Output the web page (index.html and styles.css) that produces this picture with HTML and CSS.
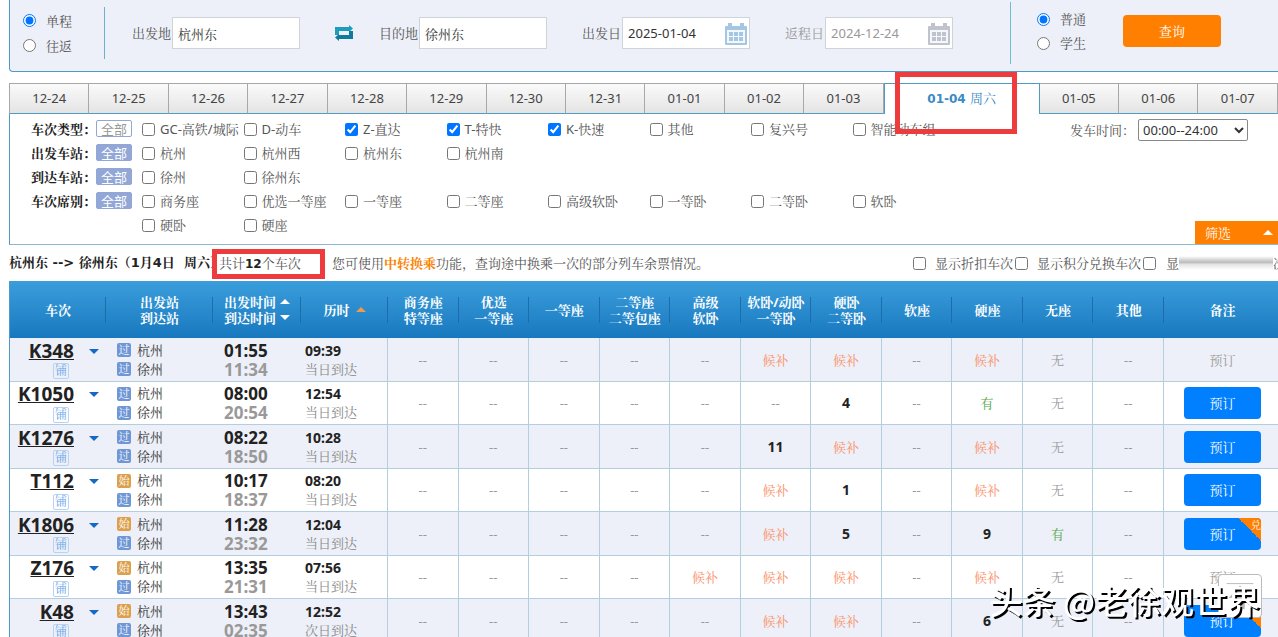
FILE: index.html
```html
<!DOCTYPE html>
<html lang="zh-CN">
<head>
<meta charset="utf-8">
<title>车票查询</title>
<link rel="stylesheet" href="styles.css">
</head>
<body>
<svg class="defs" aria-hidden="true">
  <symbol id="cal" viewBox="0 0 22 22">
    <path fill="currentColor" d="M1 3h2V0h4v3h8V0h4v3h2q1 0 1 1v17q0 1-1 1H1q-1 0-1-1V4q0-1 1-1z"/>
    <path fill="#f4f8fc" d="M2 7h18v13H2z"/>
    <path fill="currentColor" d="M4 9h4v4H4zM9 9h4v4H9zM14 9h4v4h-4zM4 14h4v4H4zM9 14h4v4H9zM14 14h4v4h-4z"/>
  </symbol>
</svg>
<form class="search">
  <div class="radios">
    <label><input type="radio" name="trip" checked>单程</label>
    <label><input type="radio" name="trip">往返</label>
  </div>
  <div class="rule"></div>
  <div class="field"><label for="from">出发地</label><input id="from" type="text" value="杭州东"></div>
  <button type="button" class="swap" aria-label="切换">
    <svg viewBox="0 0 18 16"><path fill="#1d9dbb" d="M0 10V2h14V0l4 3.500L14 7V6H4v4z"/><path fill="#147a99" d="M18 6v8H4v2l-4-3.500L4 9v1h10V6z"/></svg>
  </button>
  <div class="field"><label for="to">目的地</label><input id="to" type="text" value="徐州东"></div>
  <div class="field date"><label for="go">出发日</label><input id="go" type="text" value="2025-01-04"><svg class="cal"><use href="#cal"/></svg></div>
  <div class="field date off"><label for="back">返程日</label><input id="back" type="text" value="2024-12-24"><svg class="cal"><use href="#cal"/></svg></div>
  <div class="rule last"></div>
  <div class="radios kind">
    <label><input type="radio" name="kind" checked>普通</label>
    <label><input type="radio" name="kind">学生</label>
  </div>
  <button type="button" class="query">查询</button>
</form>

<nav class="days">
  <a href="#">12-24</a><a href="#">12-25</a><a href="#">12-26</a><a href="#">12-27</a><a href="#">12-28</a><a href="#">12-29</a><a href="#">12-30</a><a href="#">12-31</a><a href="#">01-01</a><a href="#">01-02</a><a href="#">01-03</a><a href="#" class="on">01-04 <span>周六</span><span class="mark mark-day"></span></a><a href="#">01-05</a><a href="#">01-06</a><a href="#">01-07</a>
</nav>

<section class="filter">
  <div class="groups">
    <div class="group"><b>车次类型：</b><button type="button" class="all ghost">全部</button>
      <div class="opts">
        <label><input type="checkbox">GC-高铁/城际</label><label><input type="checkbox">D-动车</label><label><input type="checkbox" checked>Z-直达</label><label><input type="checkbox" checked>T-特快</label><label><input type="checkbox" checked>K-快速</label><label><input type="checkbox">其他</label><label><input type="checkbox">复兴号</label><label><input type="checkbox">智能动车组</label>
      </div></div>
    <div class="group"><b>出发车站：</b><button type="button" class="all">全部</button>
      <div class="opts">
        <label><input type="checkbox">杭州</label><label><input type="checkbox">杭州西</label><label><input type="checkbox">杭州东</label><label><input type="checkbox">杭州南</label>
      </div></div>
    <div class="group"><b>到达车站：</b><button type="button" class="all">全部</button>
      <div class="opts">
        <label><input type="checkbox">徐州</label><label><input type="checkbox">徐州东</label>
      </div></div>
    <div class="group"><b>车次席别：</b><button type="button" class="all">全部</button>
      <div class="opts">
        <label><input type="checkbox">商务座</label><label><input type="checkbox">优选一等座</label><label><input type="checkbox">一等座</label><label><input type="checkbox">二等座</label><label><input type="checkbox">高级软卧</label><label><input type="checkbox">一等卧</label><label><input type="checkbox">二等卧</label><label><input type="checkbox">软卧</label><label><input type="checkbox">硬卧</label><label><input type="checkbox">硬座</label>
      </div></div>
  </div>
  <div class="side">
    <div class="time"><label for="time">发车时间：</label><select id="time"><option>00:00--24:00</option></select></div>
    <button type="button" class="toggle">筛选<i class="tri up"></i></button>
  </div>
</section>

<div class="info">
  <strong>杭州东 --&gt; 徐州东（1月4日&nbsp; 周六）</strong>
  <span class="count">共计<b>12</b>个车次<span class="mark mark-count"></span></span>
  <span class="tip">您可使用<a href="#">中转换乘</a>功能，查询途中换乘一次的部分列车余票情况。</span>
  <span class="shows">
    <label><input type="checkbox">显示折扣车次</label>
    <label><input type="checkbox">显示积分兑换车次</label>
    <label><input type="checkbox">显<span class="smear"></span>次</label>
  </span>
</div>

<table class="trains">
  <colgroup><col class="c-no"><col class="c-st"><col class="c-tm"><col class="c-du"><col><col><col><col><col><col><col><col><col><col><col><col class="c-op"></colgroup>
  <thead>
    <tr>
      <th>车次</th><th>出发站<br>到达站</th><th>出发时间<i class="tri up"></i><br>到达时间<i class="tri down"></i></th><th>历时<i class="tri up hot"></i></th><th>商务座<br>特等座</th><th>优选<br>一等座</th><th>一等座</th><th>二等座<br>二等包座</th><th>高级<br>软卧</th><th>软卧/动卧<br>一等卧</th><th>硬卧<br>二等卧</th><th>软座</th><th>硬座</th><th>无座</th><th>其他</th><th>备注</th>
    </tr>
  </thead>
  <tbody>
    <tr><td><div class="no"><a href="#">K348</a><i class="tri down blue"></i><span>铺</span></div></td><td class="st"><p><i>过</i>杭州</p><p><i>过</i>徐州</p></td><td class="tm"><p>01:55</p><p>11:34</p></td><td class="du"><p>09:39</p><p>当日到达</p></td>
      <td>--</td><td>--</td><td>--</td><td>--</td><td>--</td><td class="wait">候补</td><td class="wait">候补</td><td>--</td><td class="wait">候补</td><td>无</td><td>--</td><td>预订</td></tr>
    <tr><td><div class="no"><a href="#">K1050</a><i class="tri down blue"></i><span>铺</span></div></td><td class="st"><p><i>过</i>杭州</p><p><i>过</i>徐州</p></td><td class="tm"><p>08:00</p><p>20:54</p></td><td class="du"><p>12:54</p><p>当日到达</p></td>
      <td>--</td><td>--</td><td>--</td><td>--</td><td>--</td><td>--</td><td class="num">4</td><td>--</td><td class="yes">有</td><td>无</td><td>--</td><td><button type="button" class="book">预订</button></td></tr>
    <tr><td><div class="no"><a href="#">K1276</a><i class="tri down blue"></i><span>铺</span></div></td><td class="st"><p><i>过</i>杭州</p><p><i>过</i>徐州</p></td><td class="tm"><p>08:22</p><p>18:50</p></td><td class="du"><p>10:28</p><p>当日到达</p></td>
      <td>--</td><td>--</td><td>--</td><td>--</td><td>--</td><td class="num">11</td><td class="wait">候补</td><td>--</td><td class="wait">候补</td><td>无</td><td>--</td><td><button type="button" class="book">预订</button></td></tr>
    <tr><td><div class="no"><a href="#">T112</a><i class="tri down blue"></i><span>铺</span></div></td><td class="st"><p><i class="first">始</i>杭州</p><p><i>过</i>徐州</p></td><td class="tm"><p>10:17</p><p>18:37</p></td><td class="du"><p>08:20</p><p>当日到达</p></td>
      <td>--</td><td>--</td><td>--</td><td>--</td><td>--</td><td class="wait">候补</td><td class="num">1</td><td>--</td><td class="wait">候补</td><td>无</td><td>--</td><td><button type="button" class="book">预订</button></td></tr>
    <tr><td><div class="no"><a href="#">K1806</a><i class="tri down blue"></i><span>铺</span></div></td><td class="st"><p><i class="first">始</i>杭州</p><p><i>过</i>徐州</p></td><td class="tm"><p>11:28</p><p>23:32</p></td><td class="du"><p>12:04</p><p>当日到达</p></td>
      <td>--</td><td>--</td><td>--</td><td>--</td><td>--</td><td class="wait">候补</td><td class="num">5</td><td>--</td><td class="num">9</td><td class="yes">有</td><td>--</td><td><button type="button" class="book">预订<span class="corner">兑</span></button></td></tr>
    <tr><td><div class="no"><a href="#">Z176</a><i class="tri down blue"></i><span>铺</span></div></td><td class="st"><p><i class="first">始</i>杭州</p><p><i>过</i>徐州</p></td><td class="tm"><p>13:35</p><p>21:31</p></td><td class="du"><p>07:56</p><p>当日到达</p></td>
      <td>--</td><td>--</td><td>--</td><td>--</td><td class="wait">候补</td><td class="wait">候补</td><td class="wait">候补</td><td>--</td><td class="wait">候补</td><td>无</td><td>--</td><td>预订</td></tr>
    <tr><td><div class="no"><a href="#">K48</a><i class="tri down blue"></i><span>铺</span></div></td><td class="st"><p><i class="first">始</i>杭州</p><p><i>过</i>徐州</p></td><td class="tm"><p>13:43</p><p>02:35</p></td><td class="du"><p>12:52</p><p>次日到达</p></td>
      <td>--</td><td>--</td><td>--</td><td>--</td><td>--</td><td class="wait">候补</td><td class="wait">候补</td><td>--</td><td class="num">6</td><td>无</td><td>--</td><td><button type="button" class="book">预订<span class="corner">兑</span></button></td></tr>
  </tbody>
</table>

<button type="button" class="totop" aria-label="返回顶部">
  <svg viewBox="0 0 44 44"><path d="M8 9h28" stroke="#bbb"/><path d="M22 11L34 24H27V36H17V24H10z" fill="#bbb"/></svg>
</button>
<div class="watermark">头条 @老徐观世界</div>
</body>
</html>
```

FILE: styles.css
```css
* { box-sizing: border-box; }

body {
  margin: 0;
  padding-left: 9px;
  height: 100vh;
  overflow: hidden;
  background: #fff;
  color: #555;
  font: 13px/16px "Noto Sans", "Noto Serif CJK SC", "Noto Sans CJK SC", sans-serif;
}

button, input, select { font: inherit; margin: 0; }
button { border: 0; padding: 0; cursor: pointer; }
input[type="radio"], input[type="checkbox"] {
  flex: none;
  width: 13px;
  height: 13px;
  accent-color: #0075ff;
}
a { color: inherit; text-decoration: none; }
p { margin: 0; }
.defs { position: absolute; width: 0; height: 0; }

/* search bar */
.search {
  display: flex;
  align-items: center;
  height: 72px;
  margin-right: -3px;
  padding: 0 0 5px 13px;
  border: solid #4f9bc6;
  border-width: 0 0 1px 1px;
  border-bottom-left-radius: 4px;
  background: #edf0f8;
  white-space: nowrap;
}
.search > * { flex: none; }
.radios { display: grid; gap: 9px; }
.radios label { display: flex; align-items: center; gap: 10px; }
.rule { width: 1px; height: 52px; margin: 0 27px 0 32px; background: #6fb0cf; }
.rule.last { height: 62px; margin: 0 26px 0 57px; background: #6dbfd0; }
.kind { gap: 8px; padding-bottom: 4px; }
.field { position: relative; display: flex; align-items: center; gap: 1px; }
.field input {
  width: 128px;
  height: 32px;
  padding: 0 5px;
  border: 1px solid #cfd4d8;
  background: #fff;
  color: #333;
}
.swap { width: 18px; height: 16px; margin: 0 26px 0 35px; background: none; }
.swap svg { display: block; }
.date { margin-left: 35px; }
.cal { position: absolute; right: 3px; top: 6px; width: 22px; height: 22px; color: #a3c6e2; }
.off label, .off input { color: #999; }
.off .cal { color: #c0c3cc; }
.query {
  width: 98px;
  height: 32px;
  margin: 0 0 4px 37px;
  border-radius: 4px;
  background: #ff8000;
  color: #fff;
}

/* date tabs */
.days {
  display: flex;
  height: 31px;
  margin-top: 11px;
  border-left: 1px solid #a8a8a8;
}
.days a {
  flex: 1;
  border: solid #a8a8a8;
  border-width: 1px 1px 1px 0;
  border-bottom-color: #4f9bc6;
  background: linear-gradient(#fafafa, #e4e4e4);
  color: #444;
  line-height: 29px;
  text-align: center;
}
.days .on {
  position: relative;
  flex: 0 0 156px;
  border: solid #4f9bc6;
  border-width: 1px 1px 0;
  background: #fff;
  color: #3b8ac4;
  font-family: "DejaVu Sans", "Noto Serif CJK SC", "Noto Sans CJK SC", sans-serif;
  font-size: 12px;
  font-weight: bold;
}
.on span { font-size: 13px; font-weight: normal; }
.mark { position: absolute; border: 5px solid #ee3b3e; pointer-events: none; }
.mark-day { left: 10px; top: -12px; width: 122px; height: 62px; z-index: 2; }

/* filter box */
.filter {
  display: flex;
  height: 131px;
  margin-right: -3px;
  border-left: 1px solid #4f9bc6;
  border-bottom: 1px solid #8bb9cf;
}
.groups { flex: 1; margin-right: 116px; padding: 3px 0 0 21px; }
.group { display: flex; color: #222; }
.group > b { width: 65px; line-height: 24px; white-space: nowrap; }
.all {
  width: 36px;
  height: 17px;
  margin: 3px 10px 0 0;
  border: 1px solid #92a7d6;
  border-radius: 2px;
  background: #92a7d6;
  color: #fff;
  font-family: "Noto Sans CJK SC", sans-serif;
  line-height: 15px;
}
.ghost { background: #fff; color: #999; }
.opts { flex: 1; display: grid; grid-template-columns: repeat(8, minmax(0, 1fr)); }
.opts label {
  display: flex;
  align-items: center;
  gap: 5px;
  height: 24px;
  color: #555;
  white-space: nowrap;
}
.side {
  display: flex;
  flex-direction: column;
  justify-content: space-between;
  width: 211px;
}
.time { display: flex; align-items: center; gap: 3px; padding-top: 5px; white-space: nowrap; }
.time select {
  width: 110px;
  height: 22px;
  border: 1px solid #888;
  border-radius: 2px;
  background: #fff;
  color: #333;
}
.toggle {
  display: flex;
  align-items: center;
  justify-content: space-between;
  align-self: flex-end;
  width: 86px;
  height: 23px;
  padding: 0 8px 0 10px;
  background: #ff8000;
  color: #fff;
}

.tri { display: inline-block; border: solid transparent; border-width: 0 5px; }
.tri.up { border-bottom: 5px solid #fff; }
.tri.down { border-top: 5px solid #fff; }
.trains .tri.hot { border-bottom-color: #f09a4a; }
.trains .tri.blue { border-top-color: #1468c8; }

/* result summary */
.info { display: flex; align-items: center; height: 36px; white-space: nowrap; }
.info strong, .info b {
  color: #222;
  font-family: "DejaVu Sans", "Noto Serif CJK SC", "Noto Sans CJK SC", sans-serif;
}
.info b { font-size: 12px; }
.info strong { width: 210px; }
.count { position: relative; width: 113px; }
.mark-count { left: -7px; top: -6px; width: 113px; height: 30px; }
.tip a { color: #fc8302; font-weight: bold; }
.shows { display: flex; gap: 2px; margin-left: auto; margin-right: -8px; }
.shows label { display: flex; align-items: center; gap: 9px; }
.shows label:last-child { gap: 0; }
.shows label:last-child input { margin-right: 10px; }
.smear {
  width: 94px;
  height: 14px;
  background: linear-gradient(#fff, #bbb 45%, #e4e4e4 60%, #fff);
}

/* trains */
.trains {
  table-layout: fixed;
  width: calc(100% + 3px);
  border-spacing: 0;
  border-left: 1px solid #4f9bc6;
}
.c-no { width: 96px; }
.c-st { width: 107px; }
.c-tm { width: 88px; }
.c-du { width: 87px; }
.c-op { width: 117px; }
.trains thead tr { height: 57px; background: linear-gradient(#3b9edb, #1878bf); }
.trains th {
  padding: 0;
  background: linear-gradient(#1d6cab, #1d6cab) right center / 1px 26px no-repeat;
  color: #fff;
  white-space: nowrap;
}
.trains th:last-child { background: none; }
.trains th .tri { margin-left: 4px; vertical-align: 3px; }
.trains th .hot { margin-left: 6px; }
.trains td {
  height: 43px;
  padding: 0;
  border: solid #b3cfdd;
  border-width: 0 1px 1px 0;
  color: #999;
  text-align: center;
}
.trains tr:nth-child(odd) td { height: 44px; background: #edf0f8; }
.trains td:nth-child(-n+3), .trains td:last-child { border-right: 0; }
.trains td p { height: 19px; line-height: 19px; }
.no {
  display: grid;
  grid-template-columns: 64px auto;
  grid-template-rows: 23px 17px;
  align-items: center;
  justify-content: start;
  column-gap: 15px;
}
.no a {
  justify-self: end;
  color: #222;
  font-size: 19px;
  font-weight: bold;
  line-height: 23px;
  text-decoration: underline;
}
.no span {
  justify-self: end;
  width: 16px;
  height: 16px;
  margin-right: 5px;
  border: 1px solid #b5d3f5;
  border-radius: 2px;
  color: #6ba5e8;
  font-size: 12px;
  line-height: 14px;
}
.trains .st { padding-left: 11px; color: #333; text-align: left; }
.st p { display: flex; align-items: center; gap: 6px; }
.st i {
  width: 14px;
  height: 14px;
  border-radius: 2px;
  background: #6f97d6;
  color: #fff;
  font-size: 11px;
  font-style: normal;
  line-height: 14px;
  text-align: center;
}
.st .first { background: #dca04c; }
.trains .tm { padding-left: 11px; font-size: 17px; font-weight: bold; text-align: left; }
.tm p:first-child, .du p:first-child { color: #222; }
.trains .du { padding-left: 4px; color: #888; text-align: left; }
.du p:first-child { font-size: 14px; font-weight: bold; }
.trains .wait { color: #fb9068; }
.trains .yes { color: #55a84b; }
.trains .num { color: #222; font-size: 14px; font-weight: bold; }
.book {
  position: relative;
  width: 77px;
  height: 32px;
  border-radius: 4px;
  background: #007fff;
  color: #fff;
  overflow: hidden;
  vertical-align: middle;
}
.corner {
  position: absolute;
  top: 0;
  right: 0;
  width: 23px;
  height: 23px;
  background: linear-gradient(45deg, transparent 50%, #ff8000 50%);
  font-size: 10px;
  line-height: 14px;
  text-align: right;
}

.totop {
  position: fixed;
  right: 16px;
  bottom: 19px;
  width: 44px;
  height: 44px;
  border: 1px solid #bbb;
  border-radius: 4px;
  background: #fff;
}
.totop svg { display: block; }
.watermark {
  position: fixed;
  right: 18px;
  bottom: 14px;
  color: #fff;
  font: 500 33px/46px "Noto Sans CJK SC", sans-serif;
  text-shadow: 2px 2px 0 #000;
  white-space: nowrap;
}
```
